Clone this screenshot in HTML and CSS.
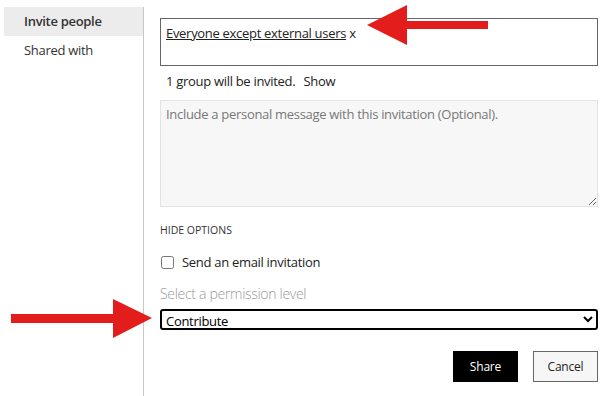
FILE: index.html
```html
<!DOCTYPE html>
<html lang="en">
<head>
  <meta charset="UTF-8">
  <title>Share</title>
  <link rel="stylesheet" href="styles.css">
</head>
<body>
  <div class="page">
    <!-- Left navigation -->
    <div class="nav">
      <div class="nav-item active">Invite people</div>
      <div class="nav-item">Shared with</div>
    </div>

    <!-- Invite form -->
    <div class="main">
      <div class="people-box">
        <a class="person">Everyone except external users</a> x
      </div>
      <div class="summary">1 group will be invited. <span class="show-link">Show</span></div>
      <textarea class="message" placeholder="Include a personal message with this invitation (Optional)."></textarea>
      <div class="hide-options">HIDE OPTIONS</div>
      <label class="check-row"><input type="checkbox"> Send an email invitation</label>
      <div class="perm-label">Select a permission level</div>
      <select class="perm-select">
        <option>Contribute</option>
      </select>
      <div class="actions">
        <button class="btn btn-primary">Share</button>
        <button class="btn">Cancel</button>
      </div>
    </div>
  </div>

  <!-- Annotation arrows -->
  <svg class="arrow arrow-top" width="130" height="44" viewBox="0 0 130 44">
    <polygon points="0,21 40,1 40,17 121,17 121,25 40,25 40,41" fill="#e31c1c"/>
  </svg>
  <svg class="arrow arrow-bottom" width="145" height="42" viewBox="0 0 145 42">
    <polygon points="0,15 102,15 102,0 141,19 102,39 102,24 0,24" fill="#e31c1c"/>
  </svg>
</body>
</html>
```

FILE: styles.css
```css
body {
  margin: 0;
  background-color: #ffffff;
  font-family: "Open Sans", "Noto Sans", sans-serif;
  letter-spacing: -0.3px;
  color: #222;
}

.page {
  display: flex;
  min-height: 396px;
}

.nav {
  width: 139px;
  margin: 7px 0 0 4px;
  border-right: 1px solid #c8c8c8;
  flex-shrink: 0;
}

.nav-item {
  height: 29px;
  line-height: 29px;
  padding-left: 20px;
  font-size: 13px;
  color: #333;
}

.nav-item.active {
  background-color: #ececec;
  font-weight: 600;
}

.main {
  width: 438px;
  padding: 18px 0 0 16px;
}

.people-box {
  height: 48px;
  border: 1px solid #666;
  padding: 3px 5px;
  box-sizing: border-box;
  font-size: 13px;
  line-height: 22px;
  color: #222;
}

.person {
  text-decoration: underline;
}

.summary {
  margin-top: 5px;
  font-size: 13px;
  line-height: 20px;
  padding-left: 6px;
}

.show-link {
  margin-left: 5px;
}

.message {
  display: block;
  width: 438px;
  height: 107px;
  margin: 9px 0 0;
  box-sizing: border-box;
  background-color: #f7f7f7;
  border: 1px solid #e3e3e3;
  padding: 4px 5px;
  font-family: inherit;
  font-size: 13px;
  letter-spacing: -0.3px;
  resize: vertical;
}

.message::placeholder {
  color: #777;
}

.hide-options {
  margin-top: 17px;
  font-size: 10.5px;
  line-height: 13px;
  letter-spacing: 0;
  color: #333;
}

.check-row {
  display: flex;
  align-items: center;
  gap: 8px;
  margin-top: 16px;
  font-size: 13px;
  line-height: 18px;
  color: #222;
}

.check-row input {
  width: 13px;
  height: 13px;
  margin: 0 0 0 1px;
}

.perm-label {
  margin-top: 14px;
  font-size: 14px;
  line-height: 18px;
  font-weight: 300;
  color: #999;
}

.perm-select {
  display: block;
  width: 438px;
  height: 21px;
  margin: 6px 0 0;
  border: 2px solid #000;
  border-radius: 3px;
  font-family: inherit;
  font-size: 13px;
  letter-spacing: -0.3px;
  background: #fff;
  color: #000;
}

.actions {
  display: flex;
  justify-content: flex-end;
  gap: 15px;
  margin-top: 21px;
}

.btn {
  width: 65px;
  height: 31px;
  font-family: inherit;
  font-size: 12px;
  letter-spacing: -0.2px;
  border: 1px solid #666;
  background-color: #f6f6f6;
  color: #222;
}

.btn-primary {
  background-color: #000;
  border-color: #000;
  color: #fff;
}

.arrow {
  position: absolute;
}

.arrow-top {
  left: 367px;
  top: 4px;
}

.arrow-bottom {
  left: 11px;
  top: 299px;
}
```
